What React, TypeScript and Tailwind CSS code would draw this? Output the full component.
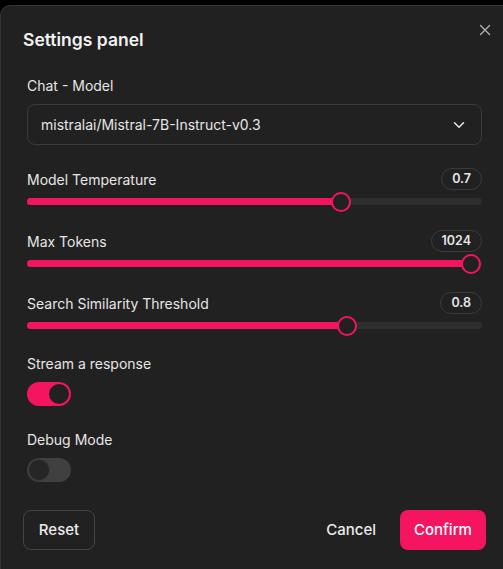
import React from "react";

const PINK = "bg-[#f4145f]";

function Slider({ pos, fill }: { pos: number; fill: number }) {
  return (
    <div className="relative h-[20px] mt-[2px]">
      <div className="absolute left-0 right-0 top-[6px] h-[7px] rounded-full bg-[#2e2e2e]" />
      <div
        className={`absolute left-0 top-[6px] h-[7px] rounded-full ${PINK}`}
        style={{ width: fill }}
      />
      <div
        className="absolute top-0 w-[20px] h-[20px] rounded-full border-[2.5px] border-[#f4145f] bg-[#212121]"
        style={{ left: pos - 10 }}
      />
    </div>
  );
}

function SliderRow({
  label,
  value,
  pos,
  mt,
}: {
  label: string;
  value: string;
  pos: number;
  mt: string;
}) {
  return (
    <div className={mt}>
      <div className="flex items-center justify-between h-[22px]">
        <span className="text-[14px] text-[#e6e6e6]">{label}</span>
        <span className="h-[22px] px-[10px] rounded-full border border-[#3a3a3a] text-[12.5px] font-semibold text-[#e6e6e6] flex items-center leading-none">
          {value}
        </span>
      </div>
      <Slider pos={pos} fill={pos} />
    </div>
  );
}

export default function App() {
  return (
    <div
      className="w-[503px] h-[569px] bg-black pt-[5px] overflow-hidden"
      style={{ fontFamily: "Inter, 'Noto Sans', sans-serif" }}
    >
      <div className="relative h-[600px] w-[520px] bg-[#212121] border border-[#333333] rounded-tl-[10px] pt-[22px]">
        <button className="absolute left-[478px] top-[18px] text-[#b0b0b0]">
          <svg width="12" height="12" viewBox="0 0 12 12" fill="none">
            <path d="M1.5 1.5L10.5 10.5M10.5 1.5L1.5 10.5" stroke="currentColor" strokeWidth="1.4" strokeLinecap="round" />
          </svg>
        </button>
        <h1 className="pl-[22px] text-[17.5px] leading-[24px] font-semibold text-[#f2f2f2]">Settings panel</h1>
        <div className="pl-[26px] w-[481px]">
          <div className="mt-[24px] text-[14px] leading-[20px] text-[#e6e6e6]">Chat - Model</div>
          <div className="mt-[8px] h-[41px] rounded-[8px] border border-[#3a3a3a] flex items-center justify-between pl-[13px] pr-[13px]">
            <span className="text-[14px] text-[#e6e6e6]">mistralai/Mistral-7B-Instruct-v0.3</span>
            <svg width="18" height="18" viewBox="0 0 24 24" fill="none" stroke="#e6e6e6" strokeWidth="2" strokeLinecap="round" strokeLinejoin="round">
              <path d="M6 9l6 6 6-6" />
            </svg>
          </div>
          <SliderRow label="Model Temperature" value="0.7" pos={314} mt="mt-[23px]" />
          <SliderRow label="Max Tokens" value="1024" pos={444} mt="mt-[18px]" />
          <SliderRow label="Search Similarity Threshold" value="0.8" pos={320} mt="mt-[18px]" />
          <div className="mt-[18px] text-[14px] leading-[20px] text-[#e6e6e6]">Stream a response</div>
          <div className={`mt-[8px] w-[44px] h-[24px] rounded-full ${PINK} flex items-center justify-end pr-[2px]`}>
            <div className="w-[20px] h-[20px] rounded-full bg-[#212121]" />
          </div>
          <div className="mt-[24px] text-[14px] leading-[20px] text-[#e6e6e6]">Debug Mode</div>
          <div className="mt-[8px] w-[44px] h-[24px] rounded-full bg-[#404040] flex items-center pl-[1px]">
            <div className="w-[22px] h-[22px] rounded-full bg-[#262626] border border-[#3a3a3a]" />
          </div>
        </div>
        <div className="pl-[22px] w-[485px] mt-[28px] flex items-center">
          <button className="h-[40px] w-[72px] rounded-[8px] border border-[#444444] text-[15px] font-medium text-[#ececec]">Reset</button>
          <div className="flex-1" />
          <button className="text-[15px] font-medium text-[#ececec] mr-[24px]">Cancel</button>
          <button className={`h-[40px] w-[86px] rounded-[8px] ${PINK} text-[15px] font-medium text-white`}>Confirm</button>
        </div>
      </div>
    </div>
  );
}
